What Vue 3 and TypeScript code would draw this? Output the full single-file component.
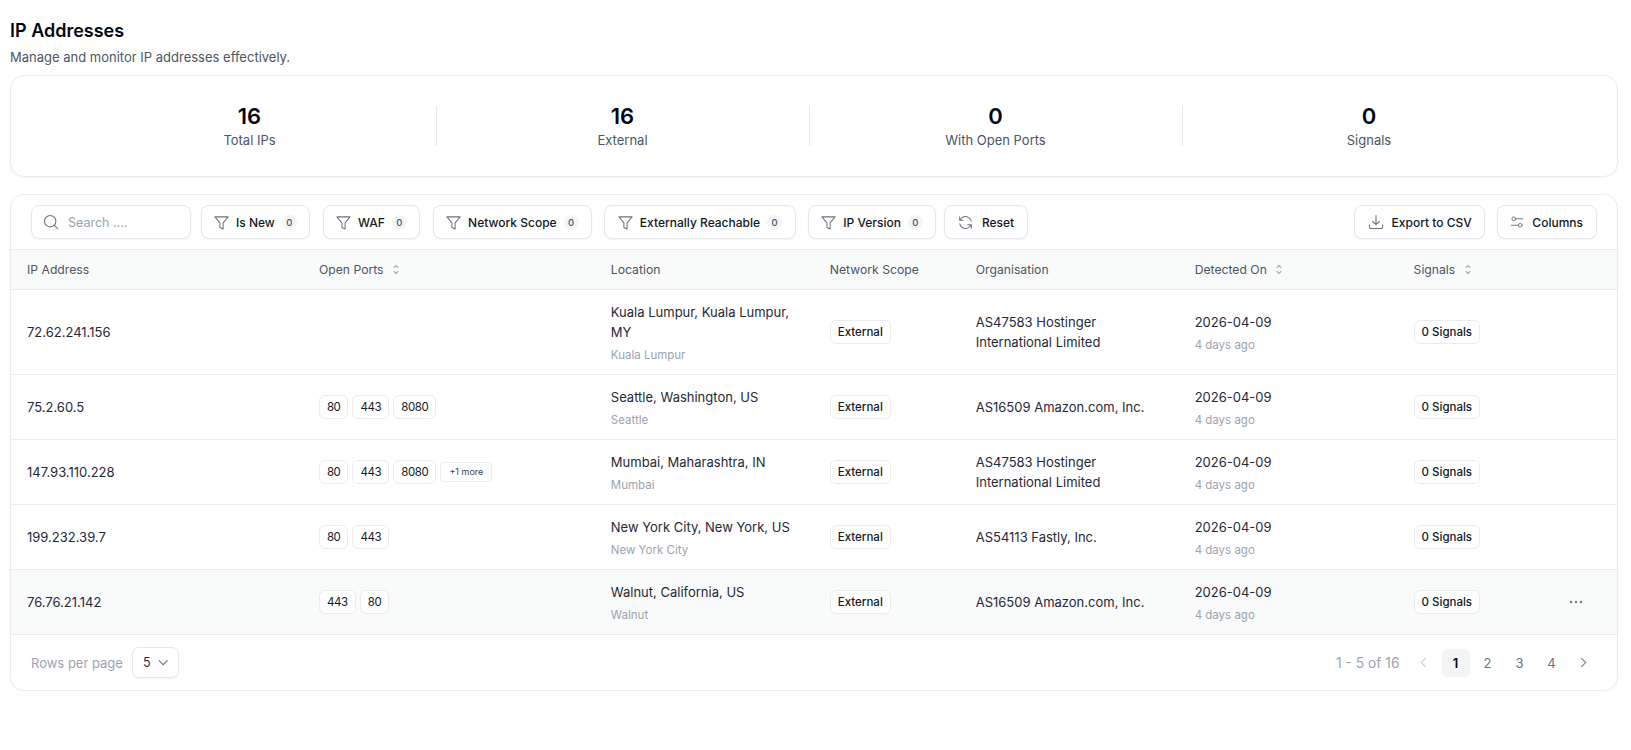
<script setup lang="ts">
interface Row { ip: string; ports: string[]; more?: string; loc: string; city: string; org: string; hover?: boolean }
const stats = [
  { n: '16', l: 'Total IPs' }, { n: '16', l: 'External' },
  { n: '0', l: 'With Open Ports' }, { n: '0', l: 'Signals' },
]
const filters = ['Is New', 'WAF', 'Network Scope', 'Externally Reachable', 'IP Version']
const rows: Row[] = [
  { ip: '72.62.241.156', ports: [], loc: 'Kuala Lumpur, Kuala Lumpur, MY', city: 'Kuala Lumpur', org: 'AS47583 Hostinger International Limited' },
  { ip: '75.2.60.5', ports: ['80', '443', '8080'], loc: 'Seattle, Washington, US', city: 'Seattle', org: 'AS16509 Amazon.com, Inc.' },
  { ip: '147.93.110.228', ports: ['80', '443', '8080'], more: '+1 more', loc: 'Mumbai, Maharashtra, IN', city: 'Mumbai', org: 'AS47583 Hostinger International Limited' },
  { ip: '199.232.39.7', ports: ['80', '443'], loc: 'New York City, New York, US', city: 'New York City', org: 'AS54113 Fastly, Inc.' },
  { ip: '76.76.21.142', ports: ['443', '80'], loc: 'Walnut, California, US', city: 'Walnut', org: 'AS16509 Amazon.com, Inc.', hover: true },
]
</script>

<template>
  <div class="page">
    <h1 class="title">IP Addresses</h1>
    <p class="sub">Manage and monitor IP addresses effectively.</p>

    <section class="stats">
      <div v-for="s in stats" :key="s.l" class="stat">
        <div class="stat-n">{{ s.n }}</div>
        <div class="stat-l">{{ s.l }}</div>
      </div>
    </section>

    <section class="card">
      <div class="toolbar">
        <label class="search">
          <svg class="ic" viewBox="0 0 16 16" width="16" height="16"><circle cx="7.2" cy="7.2" r="5.7" /><path d="M11.4 11.4l3.2 3.2" /></svg>
          <span>Search ....</span>
        </label>
        <div class="filters">
          <button v-for="f in filters" :key="f" class="btn filter">
            <svg class="ic" viewBox="0 0 16 16" width="15" height="15"><path d="M1 2h14L9.7 8.4V15L6.3 13.4V8.4z" /></svg>
            <span>{{ f }}</span>
            <span class="count">0</span>
          </button>
        </div>
        <button class="btn reset">
          <svg class="ic" viewBox="0 0 16 16" width="15" height="15"><path d="M14 6.6A6.1 6.1 0 0 0 3.2 4L1.8 5.5M1.8 1.8v3.7h3.7M2 9.4A6.1 6.1 0 0 0 12.8 12l1.4-1.5M14.2 14.2v-3.7h-3.7" /></svg>
          <span>Reset</span>
        </button>
        <div class="spacer"></div>
        <button class="btn export">
          <svg class="ic" viewBox="0 0 16 16" width="16" height="16"><path d="M8 1.5v9M4.6 7.4L8 10.7l3.4-3.3M1.5 11v2.2c0 .8.5 1.3 1.3 1.3h10.4c.8 0 1.3-.5 1.3-1.3V11" /></svg>
          <span>Export to CSV</span>
        </button>
        <button class="btn">
          <svg class="ic" viewBox="0 0 16 16" width="14" height="14"><circle cx="4.3" cy="4.3" r="2.1" /><circle cx="11.7" cy="11.7" r="2.1" /><path d="M6.6 4.3h7.9M1.5 11.7h7.9" /></svg>
          <span>Columns</span>
        </button>
      </div>

      <div class="grid head">
        <div class="cell">IP Address</div>
        <div class="cell">Open Ports
          <svg class="sort" viewBox="0 0 10 14" width="8" height="11"><path d="M2 5l3-3 3 3M2 9l3 3 3-3" /></svg>
        </div>
        <div class="cell">Location</div>
        <div class="cell">Network Scope</div>
        <div class="cell">Organisation</div>
        <div class="cell">Detected On
          <svg class="sort" viewBox="0 0 10 14" width="8" height="11"><path d="M2 5l3-3 3 3M2 9l3 3 3-3" /></svg>
        </div>
        <div class="cell">Signals
          <svg class="sort" viewBox="0 0 10 14" width="8" height="11"><path d="M2 5l3-3 3 3M2 9l3 3 3-3" /></svg>
        </div>
      </div>

      <div v-for="r in rows" :key="r.ip" class="grid row" :class="{ hover: r.hover }">
        <div class="cell">{{ r.ip }}</div>
        <div class="cell ports">
          <span v-for="p in r.ports" :key="p" class="badge">{{ p }}</span>
          <span v-if="r.more" class="more">{{ r.more }}</span>
        </div>
        <div class="cell stack">
          <div class="loc">{{ r.loc }}</div>
          <div class="muted">{{ r.city }}</div>
        </div>
        <div class="cell"><span class="badge strong">External</span></div>
        <div class="cell org">{{ r.org }}</div>
        <div class="cell stack">
          <div class="loc">2026-04-09</div>
          <div class="muted">4 days ago</div>
        </div>
        <div class="cell"><span class="badge strong">0 Signals</span></div>
        <svg v-if="r.hover" class="dots" viewBox="0 0 14 4" width="14" height="4"><circle cx="2" cy="2" r="1.2" /><circle cx="7" cy="2" r="1.2" /><circle cx="12" cy="2" r="1.2" /></svg>
      </div>

      <div class="footer">
        <span class="rpp">Rows per page</span>
        <div class="select">5
          <svg class="chev" viewBox="0 0 12 8" width="11" height="7"><path d="M1 1.5l5 5 5-5" /></svg>
        </div>
        <div class="spacer"></div>
        <span class="range">1 - 5 of 16</span>
        <nav class="pager">
          <span class="pg arrow dim"><svg viewBox="0 0 8 12" width="7" height="11"><path d="M6.5 1L1.5 6l5 5" /></svg></span>
          <span class="pg active">1</span>
          <span class="pg">2</span>
          <span class="pg">3</span>
          <span class="pg">4</span>
          <span class="pg arrow"><svg viewBox="0 0 8 12" width="7" height="11"><path d="M1.5 1l5 5-5 5" /></svg></span>
        </nav>
      </div>
    </section>
  </div>
</template>

<style>
html, body { margin: 0; background: #fff; }
</style>

<style scoped>
.page {
  box-sizing: border-box;
  width: 1631px;
  padding: 19px 13.5px 0 10px;
  font-family: Inter, "Noto Sans", sans-serif;
  font-size: 13px;
  color: #1f2937;
}
.title { margin: 0; font-size: 18px; line-height: 24px; font-weight: 600; color: #030712; }
.sub { margin: 4px 0 0; font-size: 13px; line-height: 20px; color: #4b5563; }

.stats {
  box-sizing: border-box;
  display: grid;
  grid-template-columns: repeat(4, 373px);
  margin-top: 8px;
  height: 102px;
  padding: 30px 0 0 52.5px;
  border: 1px solid #e9ebee;
  border-radius: 14px;
  box-shadow: 0 1px 2px rgba(0, 0, 0, .04);
}
.stat { height: 40px; text-align: center; border-right: 1px solid #e5e7eb; }
.stat:last-child { border-right: 0; }
.stat-n { font-size: 22px; line-height: 24px; font-weight: 600; color: #030712; margin-top: -2px; }
.stat-l { font-size: 13px; line-height: 20px; color: #4b5563; margin-top: 2px; }

.card {
  margin-top: 17px;
  border: 1px solid #e9ebee;
  border-radius: 14px;
  box-shadow: 0 1px 2px rgba(0, 0, 0, .04);
  overflow: hidden;
}
.toolbar {
  display: flex;
  align-items: center;
  gap: 8px;
  height: 55px;
  padding: 0 20px;
  box-sizing: border-box;
  border-bottom: 1px solid #e9ebee;
}
.spacer { flex: 1; }
.filters { display: flex; gap: 12.2px; margin-left: 1.5px; }
.search {
  box-sizing: border-box;
  display: flex;
  align-items: center;
  gap: 9px;
  width: 160px;
  height: 34px;
  padding: 0 11px;
  border: 1px solid #e5e7eb;
  border-radius: 8px;
  color: #9ca3af;
  font-size: 12.5px;
  box-shadow: 0 1px 2px rgba(0, 0, 0, .05);
}
.btn {
  box-sizing: border-box;
  display: inline-flex;
  align-items: center;
  gap: 8px;
  height: 34px;
  padding: 0 12.5px;
  background: #fff;
  border: 1px solid #e5e7eb;
  border-radius: 8px;
  box-shadow: 0 1px 2px rgba(0, 0, 0, .05);
  font: 500 12px Inter, "Noto Sans", sans-serif;
  color: #111827;
}
.btn.filter { gap: 7px; }
.btn.reset { gap: 9px; }
.btn.export { margin-right: 3.6px; }
.ic { fill: none; stroke: #6b7280; stroke-width: 1.1; stroke-linecap: round; stroke-linejoin: round; flex: none; }
.count {
  width: 15px; height: 15px; border-radius: 50%;
  background: #f3f4f6; color: #4b5563;
  font-size: 9.5px; line-height: 15px; text-align: center;
}

.grid {
  position: relative;
  display: grid;
  grid-template-columns: 4fr 4fr 3fr 2fr 3fr 3fr 3fr;
  align-items: center;
  box-sizing: border-box;
  border-bottom: 1px solid #e9ebee;
}
.cell { padding: 0 16px; min-width: 0; }
.head { height: 40px; background: #f9fafa; color: #4b5563; font-size: 12.2px; }
.sort { fill: none; stroke: #9ca3af; stroke-width: 1.3; margin-left: 5px; vertical-align: -1px; }
.row { height: 65px; color: #1f2937; }
.row:nth-of-type(3) { height: 85px; }
.row.hover { background: #f9fafa; }
.ports { display: flex; align-items: center; gap: 4px; }
.badge {
  display: inline-block;
  box-sizing: border-box;
  height: 24px;
  padding: 0 7px;
  line-height: 23px;
  font-size: 11.5px;
  border: 1px solid #e9ebee;
  border-radius: 6px;
  background: #fff;
  color: #111827;
}
.ports .badge { letter-spacing: -0.4px; }
.badge.strong { font-weight: 500; }
.more {
  box-sizing: border-box;
  height: 20px;
  padding: 0 8px;
  line-height: 18px;
  font-size: 9px;
  border: 1px solid #e9ebee;
  border-radius: 4px;
  color: #374151;
}
.loc { line-height: 20px; }
.org { line-height: 20px; }
.muted { margin-top: 5px; font-size: 11.5px; line-height: 16px; color: #9ca3af; }
.dots { position: absolute; right: 34px; top: 30px; fill: #6b7280; }

.footer {
  display: flex;
  align-items: center;
  height: 55px;
  padding: 0 20px;
  box-sizing: border-box;
}
.rpp { color: #9ca3af; font-size: 13px; margin-right: 9px; }
.select {
  box-sizing: border-box;
  display: flex; align-items: center; gap: 7px;
  width: 47px; height: 31px;
  padding: 0 10px;
  border: 1px solid #e5e7eb;
  border-radius: 7px;
  box-shadow: 0 1px 2px rgba(0, 0, 0, .05);
  color: #1f2937;
  font-size: 12.5px;
}
.chev { fill: none; stroke: #6b7280; stroke-width: 1.2; }
.range { color: #9ca3af; font-size: 13.8px; margin-right: 10px; }
.pager { display: flex; gap: 4px; margin-right: -1px; }
.pg {
  width: 28px; height: 28px; border-radius: 6px;
  display: flex; align-items: center; justify-content: center;
  color: #6b7280; font-size: 13px;
}
.pg svg { fill: none; stroke: #6b7280; stroke-width: 1.2; }
.pg.dim svg { stroke: #c4c8ce; }
.pg.active { background: #f3f4f6; color: #030712; font-weight: 600; }
</style>
